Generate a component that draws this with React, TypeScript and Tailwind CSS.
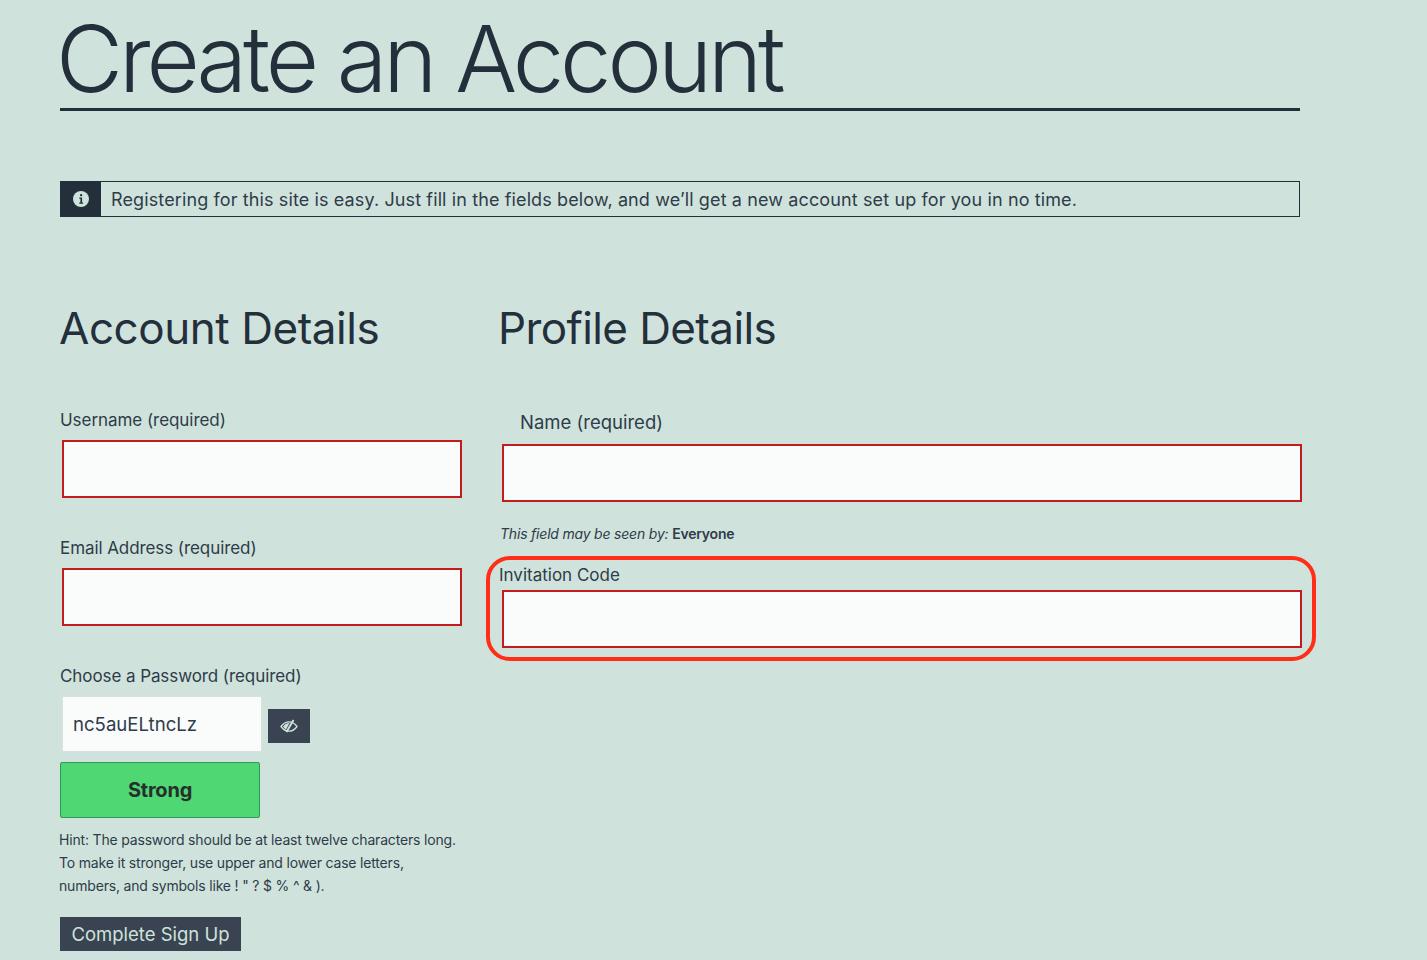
const inter = "font-['Inter',sans-serif]";

function Field({ label, labelClass, inputClass }: { label: string; labelClass: string; inputClass: string }) {
  return (
    <div>
      <label className={`block leading-[24px] text-[#2f3b49] ${labelClass}`}>{label}</label>
      <div className={`h-[58px] bg-[#fafcfb] border-2 border-[#c21c1c] ${inputClass}`}></div>
    </div>
  );
}

export default function App() {
  return (
    <div className={`${inter} relative h-[960px] overflow-hidden bg-[#cfe3dc] pl-[60px] text-[#242f3c]`}>
      <div className="w-[1240px]">
        {/* Page title */}
        <h1 className="h-[111px] border-b-[3px] border-[#242f3c] text-[92px] leading-[118px] font-light whitespace-nowrap">
          <span className="-ml-[4px] block tracking-[-4.05px]">Create an Account</span>
        </h1>

        {/* Info notice */}
        <div className="mt-[70px] flex h-[36px] items-center border border-[#242f3c]">
          <div className="flex h-full w-[40px] items-center justify-center bg-[#242f3c]">
            <svg viewBox="0 0 16 16" className="h-4 w-4">
              <circle cx="8" cy="8" r="8" fill="#cfe3dc" />
              <rect x="7" y="3" width="2.2" height="2.2" rx="1" fill="#242f3c" />
              <path d="M6.3 6.6h2.8v5h1v1.1H6.3v-1.1h1.1V7.7H6.3z" fill="#242f3c" />
            </svg>
          </div>
          <p className="pl-[10px] text-[18px] tracking-[0.12px] text-[#2f3b49] whitespace-nowrap">
            Registering for this site is easy. Just fill in the fields below, and we’ll get a new account set up for you in no time.
          </p>
        </div>

        <div className="mt-[80px] flex">
          {/* Account column */}
          <div className="w-[440px] shrink-0">
            <h2 className="-ml-px text-[44px] leading-[62px] font-normal tracking-[-0.45px]">Account Details</h2>
            <div className="mt-[49px] flex flex-col gap-[38px]">
              <Field label="Username (required)" labelClass="mb-[8px] text-[17px] tracking-[-0.05px]" inputClass="ml-[2px] w-[400px]" />
              <Field label="Email Address (required)" labelClass="mb-[8px] text-[17px] tracking-[-0.08px]" inputClass="ml-[2px] w-[400px]" />
            </div>

            <label className="mt-[38px] mb-[8px] block text-[17px] leading-[24px] tracking-[-0.08px] text-[#2f3b49]">
              Choose a Password (required)
            </label>
            <div className="flex items-center">
              <div className="ml-[2px] flex h-[56px] w-[200px] items-center border border-[#dcdfde] bg-[#fafcfb] pt-[2px] pl-[10px] text-[18.6px] text-[#2f3b49]">
                nc5auELtncLz
              </div>
              <button className="mt-[3px] ml-[6px] flex h-[34px] w-[42px] items-center justify-center bg-[#394351] text-[#cfe3dc]">
                <svg viewBox="0 0 18 14" className="h-[14px] w-[18px]" fill="none" stroke="currentColor">
                  <path d="M1 7.5C3.5 4 6 2.8 9 2.8s5.5 1.2 8 4.7c-2.5 3.5-5 4.7-8 4.7s-5.5-1.2-8-4.7z" strokeWidth="1.3" />
                  <path d="M3 7.5C4.5 5.5 6.5 4.2 9.5 4L6 10.5C4.8 9.8 3.8 8.7 3 7.5z" fill="currentColor" stroke="none" />
                  <path d="M13.5 1 6.5 13" strokeWidth="1.9" />
                </svg>
              </button>
            </div>
            <div className="mt-[10px] flex h-[56px] w-[200px] items-center justify-center rounded-[2px] border border-[#2f9a54] bg-[#4fd774] text-[20px] font-bold tracking-[-0.2px] text-[#262f2c]">
              Strong
            </div>
            <p className="mt-[10px] -ml-px w-[420px] text-[14px] leading-[23px] tracking-[-0.18px] text-[#2f3b49]">
              Hint: The password should be at least twelve characters long.
              <br />
              To make it stronger, use upper and lower case letters,
              <br />
              numbers, and symbols like ! " ? $ % ^ &amp; ).
            </p>
            <button className="mt-[20px] block h-[34px] w-[181px] bg-[#394351] pt-px text-[18.5px] text-[#cfe3dc]">Complete Sign Up</button>
          </div>

          {/* Profile column */}
          <div className="w-[802px] shrink-0">
            <h2 className="-ml-[2px] text-[44px] leading-[62px] font-normal tracking-[-0.6px]">Profile Details</h2>
            <div className="mt-[51px]">
              <Field label="Name (required)" labelClass="mb-[10px] pl-[20px] text-[18.5px]" inputClass="ml-[2px] w-[800px]" />
            </div>
            <p className="mt-[22px] text-[14px] leading-[20px] tracking-[-0.2px] text-[#2f3b49]">
              <em>This field may be seen by:</em> <strong className="font-semibold">Everyone</strong>
            </p>
            <div className="mt-[19px]">
              <Field label="Invitation Code" labelClass="mb-[3px] -ml-px text-[17px]" inputClass="ml-[2px] w-[800px]" />
            </div>
          </div>
        </div>
      </div>

      {/* Red highlight drawn over the screenshot */}
      <div className="pointer-events-none absolute top-[556px] left-[486px] h-[105px] w-[830px] rounded-[24px] border-[4px] border-[#ff2e17]"></div>
    </div>
  );
}
